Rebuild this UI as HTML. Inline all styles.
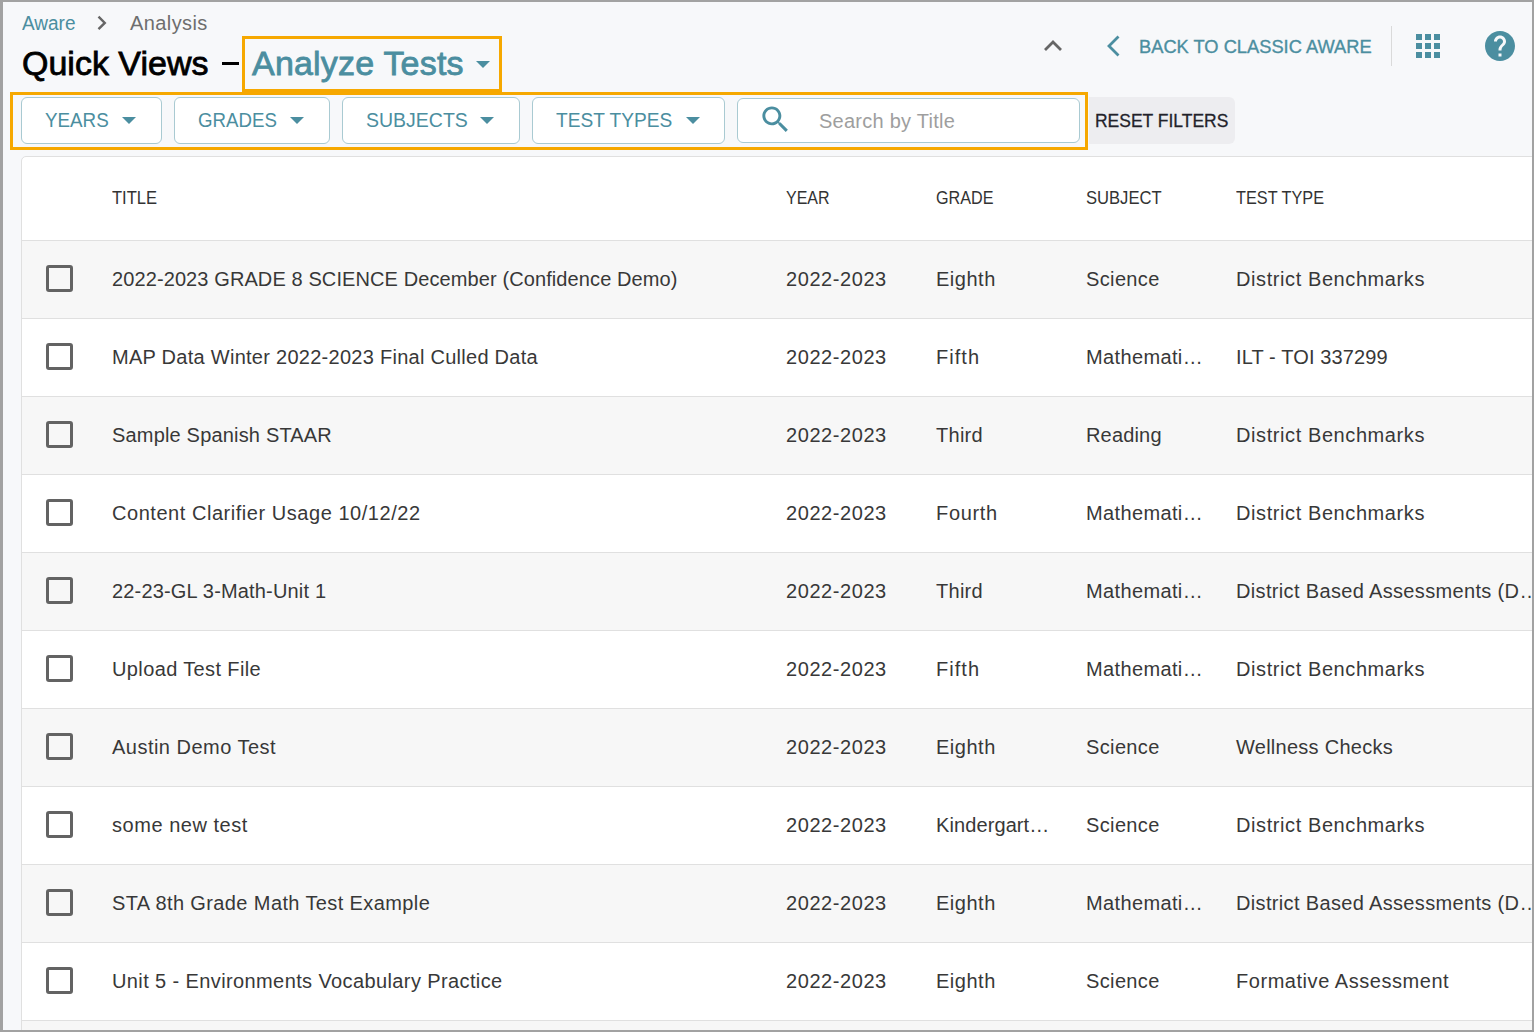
<!DOCTYPE html>
<html><head><meta charset="utf-8">
<style>
*{box-sizing:border-box;margin:0;padding:0}
html,body{width:1534px;height:1032px;overflow:hidden;background:#a2a2a2}
body{font-family:"Liberation Sans",sans-serif;position:relative}
#page{position:absolute;left:3px;top:2px;width:1529px;height:1028px;background:#f7f8fa;overflow:hidden}
.a{position:absolute;white-space:nowrap}
.t20{font-size:20px;line-height:20px}
.teal{color:#4b8ea0}
.btn{position:absolute;top:95px;height:47px;background:#fff;border:1px solid #a9cad2;border-radius:6px}
.btn .lbl{position:absolute;top:12px;font-size:20px;line-height:20px;color:#4b8ea0;transform-origin:0 0}
.caret{position:absolute;top:19px;width:0;height:0;border-left:7px solid transparent;border-right:7px solid transparent;border-top:7px solid #4b8ea0}
#card{position:absolute;left:18px;top:154px;width:1540px;height:900px;background:#fff;border:1px solid #e0e0e0;border-radius:5px}
.row{position:absolute;left:0;width:1540px;height:78px;border-bottom:1px solid #e0e0e0}
.row.odd{background:#f7f7f7}
.cell{position:absolute;top:28px;font-size:20px;line-height:20px;color:#383838;white-space:nowrap}
.hd{position:absolute;top:32px;font-size:18px;line-height:18px;color:#333;white-space:nowrap;transform-origin:0 0}
.cb{position:absolute;left:24px;top:24px;width:27px;height:27px;border:3px solid #636363;border-radius:3px}
</style></head><body>
<div id="page">
  <!-- breadcrumb -->
  <div class="a t20 teal" style="left:19px;top:11px;color:#4b8ea0;transform:scaleX(0.95);transform-origin:0 0">Aware</div>
  <svg class="a" style="left:92px;top:12px" width="16" height="20" viewBox="0 0 16 20"><path d="M3.5 2.6 L9.8 8.9 L3.5 15.2" fill="none" stroke="#666" stroke-width="2.4"/></svg>
  <div class="a t20" style="left:127px;top:11px;color:#6e6e6e;letter-spacing:0.4px">Analysis</div>
  <!-- title -->
  <div class="a" style="left:19px;top:44px;font-size:34px;line-height:34px;color:#000;-webkit-text-stroke:0.8px #000">Quick Views</div>
  <div class="a" style="left:219px;top:60px;width:17px;height:3px;background:#000"></div>
  <div class="a" style="left:239px;top:34px;width:260px;height:56px;border:3px solid #f6a800"></div>
  <div class="a teal" style="left:249px;top:44px;font-size:34px;line-height:34px;letter-spacing:0.2px;-webkit-text-stroke:0.8px #4b8ea0">Analyze Tests</div>
  <div class="a" style="left:473px;top:59px;width:0;height:0;border-left:7px solid transparent;border-right:7px solid transparent;border-top:7px solid #4b8ea0"></div>
  <!-- right header -->
  <svg class="a" style="left:1038px;top:34px" width="28" height="20" viewBox="0 0 28 20"><path d="M4 14 L12 6 L20 14" fill="none" stroke="#666" stroke-width="2.8"/></svg>
  <svg class="a" style="left:1100px;top:32px" width="24" height="28" viewBox="0 0 24 28"><path d="M15.5 2.5 L6 12 L15.5 21.5" fill="none" stroke="#4b8ea0" stroke-width="2.8"/></svg>
  <div class="a teal" style="left:1136px;top:35px;font-size:19px;line-height:19px;-webkit-text-stroke:0.35px #4b8ea0;transform:scaleX(0.962);transform-origin:0 0">BACK TO CLASSIC AWARE</div>
  <div class="a" style="left:1388px;top:24px;width:1px;height:40px;background:#dadada"></div>
  <svg class="a" style="left:1413px;top:32px" width="24" height="24" viewBox="0 0 24 24" fill="#4b8ea0">
    <rect x="0" y="0" width="6" height="6"/><rect x="9" y="0" width="6" height="6"/><rect x="18" y="0" width="6" height="6"/>
    <rect x="0" y="9" width="6" height="6"/><rect x="9" y="9" width="6" height="6"/><rect x="18" y="9" width="6" height="6"/>
    <rect x="0" y="18" width="6" height="6"/><rect x="9" y="18" width="6" height="6"/><rect x="18" y="18" width="6" height="6"/>
  </svg>
  <svg class="a" style="left:1479px;top:26px" width="36" height="36" viewBox="0 0 24 24"><path fill="#4b8ea0" d="M12 2C6.48 2 2 6.48 2 12s4.48 10 10 10 10-4.48 10-10S17.52 2 12 2zm1 17h-2v-2h2v2zm2.07-7.750l-.9.92C13.45 12.9 13 13.5 13 15h-2v-.5c0-1.1.45-2.1 1.170-2.83l1.24-1.26c.37-.36.59-.86.59-1.41 0-1.1-.9-2-2-2s-2 .9-2 2H8c0-2.21 1.790-4 4-4s4 1.79 4 4c0 .88-.36 1.68-.93 2.25z"/></svg>

  <!-- filters -->
  <div class="a" style="left:7px;top:90px;width:1078px;height:58px;border:3px solid #f6a800"></div>
  <div class="btn" style="left:18px;width:141px"><span class="lbl" style="left:23px;transform:scaleX(0.94)">YEARS</span><span class="caret" style="left:100px"></span></div>
  <div class="btn" style="left:171px;width:156px"><span class="lbl" style="left:23px;transform:scaleX(0.934)">GRADES</span><span class="caret" style="left:115px"></span></div>
  <div class="btn" style="left:339px;width:178px"><span class="lbl" style="left:23px;transform:scaleX(0.975)">SUBJECTS</span><span class="caret" style="left:137px"></span></div>
  <div class="btn" style="left:529px;width:193px"><span class="lbl" style="left:23px;transform:scaleX(0.956)">TEST TYPES</span><span class="caret" style="left:153px"></span></div>
  <div class="btn" style="left:734px;top:96px;width:343px;height:45px">
    <svg class="a" style="left:20px;top:3px" width="35" height="35" viewBox="0 0 24 24"><path fill="#4b8ea0" d="M15.5 14h-.79l-.28-.27C15.41 12.59 16 11.11 16 9.5 16 5.91 13.09 3 9.5 3S3 5.91 3 9.5 5.91 16 9.5 16c1.610 0 3.09-.59 4.23-1.57l.27.28v.79l5 4.99L20.49 19l-4.99-5zm-6 0C7.01 14 5 11.99 5 9.5S7.010 5 9.5 5 14 7.01 14 9.5 11.99 14 9.5 14z"/></svg>
    <span class="a" style="left:81px;top:12px;font-size:20px;line-height:20px;color:#9e9e9e;letter-spacing:0.25px">Search by Title</span>
  </div>
  <div class="a" style="left:1086px;top:95px;width:146px;height:47px;background:#ededf0;border-radius:0 6px 6px 0">
    <span class="a" style="left:6px;top:14px;font-size:19px;line-height:19px;color:#22222a;-webkit-text-stroke:0.3px #22222a;transform:scaleX(0.92);transform-origin:0 0">RESET FILTERS</span>
  </div>

  <!-- table -->
  <div id="card">
    <div class="hd" style="left:90px;transform:scaleX(0.92)">TITLE</div>
    <div class="hd" style="left:764px;transform:scaleX(0.89)">YEAR</div>
    <div class="hd" style="left:914px;transform:scaleX(0.897)">GRADE</div>
    <div class="hd" style="left:1064px;transform:scaleX(0.922)">SUBJECT</div>
    <div class="hd" style="left:1214px;transform:scaleX(0.904)">TEST TYPE</div>
    <div class="row" style="top:0;height:84px;background:transparent"></div>
    <div class="row odd" style="top:84px"><div class="cb"></div><div class="cell" style="left:90px;letter-spacing:0.102px">2022-2023 GRADE 8 SCIENCE December (Confidence Demo)</div><div class="cell" style="left:764px;letter-spacing:0.575px">2022-2023</div><div class="cell" style="left:914px;letter-spacing:0.520px">Eighth</div><div class="cell" style="left:1064px;letter-spacing:0.367px">Science</div><div class="cell" style="left:1214px;letter-spacing:0.589px">District Benchmarks</div></div>
    <div class="row" style="top:162px"><div class="cb"></div><div class="cell" style="left:90px;letter-spacing:0.271px">MAP Data Winter 2022-2023 Final Culled Data</div><div class="cell" style="left:764px;letter-spacing:0.575px">2022-2023</div><div class="cell" style="left:914px;letter-spacing:1.050px">Fifth</div><div class="cell" style="left:1064px;letter-spacing:0.367px">Mathemati…</div><div class="cell" style="left:1214px;letter-spacing:0.127px">ILT - TOI 337299</div></div>
    <div class="row odd" style="top:240px"><div class="cb"></div><div class="cell" style="left:90px;letter-spacing:0.179px">Sample Spanish STAAR</div><div class="cell" style="left:764px;letter-spacing:0.575px">2022-2023</div><div class="cell" style="left:914px;letter-spacing:0.275px">Third</div><div class="cell" style="left:1064px;letter-spacing:0.167px">Reading</div><div class="cell" style="left:1214px;letter-spacing:0.589px">District Benchmarks</div></div>
    <div class="row" style="top:318px"><div class="cb"></div><div class="cell" style="left:90px;letter-spacing:0.542px">Content Clarifier Usage 10/12/22</div><div class="cell" style="left:764px;letter-spacing:0.575px">2022-2023</div><div class="cell" style="left:914px;letter-spacing:0.660px">Fourth</div><div class="cell" style="left:1064px;letter-spacing:0.367px">Mathemati…</div><div class="cell" style="left:1214px;letter-spacing:0.589px">District Benchmarks</div></div>
    <div class="row odd" style="top:396px"><div class="cb"></div><div class="cell" style="left:90px;letter-spacing:0.171px">22-23-GL 3-Math-Unit 1</div><div class="cell" style="left:764px;letter-spacing:0.575px">2022-2023</div><div class="cell" style="left:914px;letter-spacing:0.275px">Third</div><div class="cell" style="left:1064px;letter-spacing:0.367px">Mathemati…</div><div class="cell" style="left:1214px;letter-spacing:0.345px">District Based Assessments (D…</div></div>
    <div class="row" style="top:474px"><div class="cb"></div><div class="cell" style="left:90px;letter-spacing:0.380px">Upload Test File</div><div class="cell" style="left:764px;letter-spacing:0.575px">2022-2023</div><div class="cell" style="left:914px;letter-spacing:1.050px">Fifth</div><div class="cell" style="left:1064px;letter-spacing:0.367px">Mathemati…</div><div class="cell" style="left:1214px;letter-spacing:0.589px">District Benchmarks</div></div>
    <div class="row odd" style="top:552px"><div class="cb"></div><div class="cell" style="left:90px;letter-spacing:0.480px">Austin Demo Test</div><div class="cell" style="left:764px;letter-spacing:0.575px">2022-2023</div><div class="cell" style="left:914px;letter-spacing:0.520px">Eighth</div><div class="cell" style="left:1064px;letter-spacing:0.367px">Science</div><div class="cell" style="left:1214px;letter-spacing:0.264px">Wellness Checks</div></div>
    <div class="row" style="top:630px"><div class="cb"></div><div class="cell" style="left:90px;letter-spacing:0.533px">some new test</div><div class="cell" style="left:764px;letter-spacing:0.575px">2022-2023</div><div class="cell" style="left:914px;letter-spacing:0.100px">Kindergart…</div><div class="cell" style="left:1064px;letter-spacing:0.367px">Science</div><div class="cell" style="left:1214px;letter-spacing:0.589px">District Benchmarks</div></div>
    <div class="row odd" style="top:708px"><div class="cb"></div><div class="cell" style="left:90px;letter-spacing:0.390px">STA 8th Grade Math Test Example</div><div class="cell" style="left:764px;letter-spacing:0.575px">2022-2023</div><div class="cell" style="left:914px;letter-spacing:0.520px">Eighth</div><div class="cell" style="left:1064px;letter-spacing:0.367px">Mathemati…</div><div class="cell" style="left:1214px;letter-spacing:0.345px">District Based Assessments (D…</div></div>
    <div class="row" style="top:786px"><div class="cb"></div><div class="cell" style="left:90px;letter-spacing:0.390px">Unit 5 - Environments Vocabulary Practice</div><div class="cell" style="left:764px;letter-spacing:0.575px">2022-2023</div><div class="cell" style="left:914px;letter-spacing:0.520px">Eighth</div><div class="cell" style="left:1064px;letter-spacing:0.367px">Science</div><div class="cell" style="left:1214px;letter-spacing:0.547px">Formative Assessment</div></div>
    <div class="row odd" style="top:864px"></div>

  </div>
</div>
</body></html>
